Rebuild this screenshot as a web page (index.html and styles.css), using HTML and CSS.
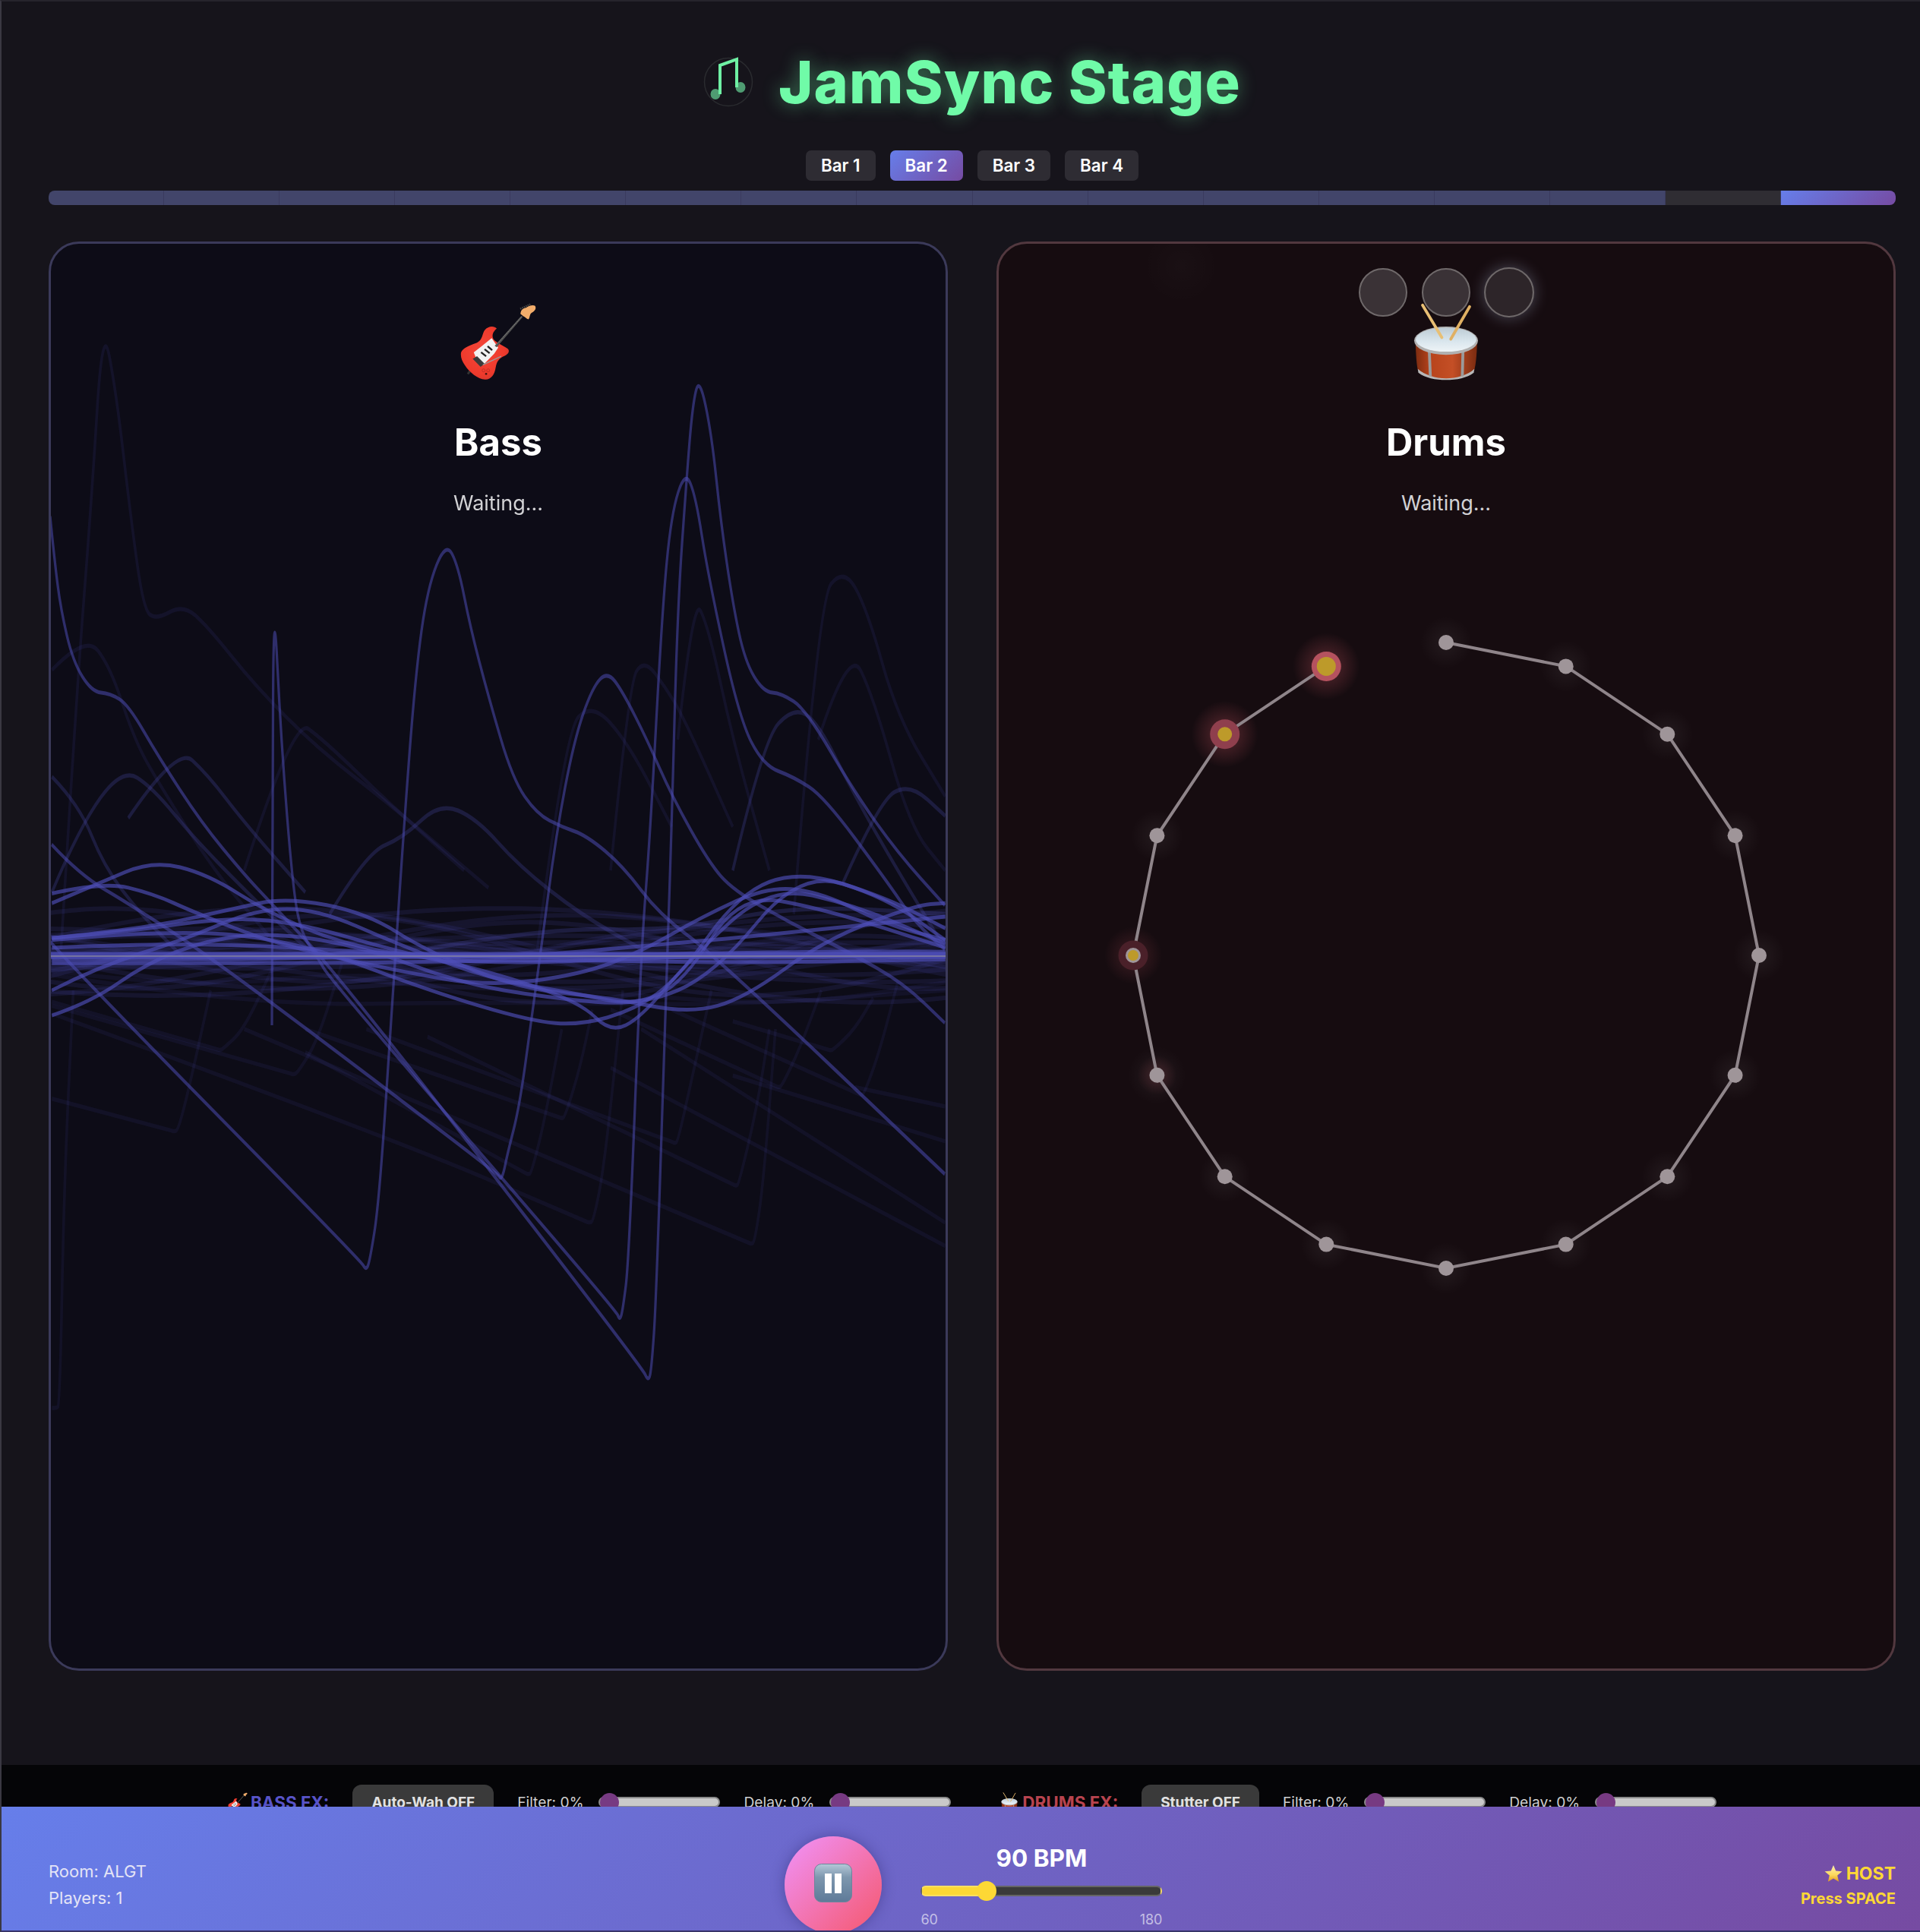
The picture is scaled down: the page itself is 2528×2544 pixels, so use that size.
FILE: index.html
```html
<!DOCTYPE html>
<html lang="en">
<head>
  <meta charset="UTF-8">
  <title>JamSync Stage</title>
  <link rel="stylesheet" href="styles.css">
</head>
<body>

  <svg class="sprites" width="0" height="0" aria-hidden="true">
    <defs>
      <radialGradient id="bodyRed" cx="45%" cy="45%" r="65%">
        <stop offset="0" stop-color="#f4473a"/>
        <stop offset="0.7" stop-color="#ee3a2c"/>
        <stop offset="1" stop-color="#c9362e"/>
      </radialGradient>
      <linearGradient id="drumShell" x1="0" y1="0" x2="1" y2="0">
        <stop offset="0" stop-color="#7d2c10"/>
        <stop offset="0.25" stop-color="#b8441c"/>
        <stop offset="0.6" stop-color="#c44f26"/>
        <stop offset="1" stop-color="#7a2b10"/>
      </linearGradient>
      <linearGradient id="drumHead" x1="0" y1="0" x2="0" y2="1">
        <stop offset="0" stop-color="#bccbd4"/>
        <stop offset="0.6" stop-color="#dbe7ee"/>
        <stop offset="1" stop-color="#eef4f7"/>
      </linearGradient>
      <linearGradient id="pauseFace" x1="0" y1="0" x2="0" y2="1">
        <stop offset="0" stop-color="#b4c8d8"/>
        <stop offset="0.35" stop-color="#7d97ae"/>
        <stop offset="1" stop-color="#5e7a98"/>
      </linearGradient>
      <linearGradient id="starFace" x1="0" y1="0" x2="0" y2="1">
        <stop offset="0" stop-color="#fff2b0"/>
        <stop offset="0.6" stop-color="#fbd75b"/>
        <stop offset="1" stop-color="#e29a1c"/>
      </linearGradient>
      <radialGradient id="halo">
        <stop offset="0" stop-color="#ffffff" stop-opacity="0.06"/>
        <stop offset="1" stop-color="#ffffff" stop-opacity="0"/>
      </radialGradient>
      <radialGradient id="redHalo">
        <stop offset="0.4" stop-color="#ff6b7a" stop-opacity="0.18"/>
        <stop offset="1" stop-color="#ff6b7a" stop-opacity="0"/>
      </radialGradient>

      <symbol id="guitar" viewBox="195 85 302 307">
        <path d="M230 352l-8 12 7 5 8-10z" fill="#333"/>
        <path d="M198 290C196 268 222 256 262 242C285 232 282 205 293 192C305 176 330 174 340 186C330 196 320 206 325 224C330 238 360 250 384 266C392 274 388 286 372 294C348 304 340 318 336 340C332 368 318 388 296 388C268 390 232 360 214 332C204 318 198 304 198 290Z" fill="url(#bodyRed)"/>
        <path d="M249 281L278 258L320 224L346 262L330 286L291 326L262 312Z" fill="#f2f2f2"/>
        <path d="M332 254L437 136L443 141L340 260Z" fill="#4f4f4f"/>
        <path d="M335 254L440 138" stroke="#b5b5b5" stroke-width="1.5" stroke-dasharray="6 3"/>
        <path d="M434 128C436 112 444 106 456 104C470 94 484 92 492 96C498 106 492 116 478 124C470 130 472 142 466 150C458 148 452 140 446 138Z" fill="#f2ad6b"/>
        <path d="M433 108L473 90" stroke="#444" stroke-width="7" stroke-dasharray="5 3"/>
        <path d="M278 280L298 296M292 268L312 284M304 256L322 272" stroke="#222" stroke-width="7"/>
        <path d="M245 306L262 296L292 326L276 338Z" fill="#3a3a3a"/>
        <path d="M285 330L358 296" stroke="#9a9a9a" stroke-width="4"/>
        <circle cx="298" cy="366" r="4" fill="#3a1410"/>
        <circle cx="288" cy="352" r="6" fill="none" stroke="#b02c22" stroke-width="2"/>
        <circle cx="306" cy="352" r="6" fill="none" stroke="#b02c22" stroke-width="2"/>
      </symbol>

      <symbol id="drum" viewBox="486 238 248 296">
        <path d="M493 384C495 440 497 470 502 494C530 518 570 530 610 530C650 530 692 518 718 494C724 470 727 440 729 384Z" fill="url(#drumShell)"/>
        <path d="M502 490C530 514 570 526 610 526C650 526 692 514 718 490L716 504C690 524 650 532 610 532C570 532 530 524 504 504Z" fill="#b7b7b7"/>
        <path d="M545 402L550 518M675 402L672 518" stroke="#9a9a9a" stroke-width="11"/>
        <ellipse cx="610" cy="382" rx="122" ry="54" fill="#b0b0b0"/>
        <ellipse cx="610" cy="378" rx="116" ry="46" fill="url(#drumHead)"/>
        <path d="M520 246L594 370" stroke="#e8bf74" stroke-width="11" stroke-linecap="round"/>
        <path d="M700 252L628 376" stroke="#e0b063" stroke-width="11" stroke-linecap="round"/>
      </symbol>

      <symbol id="star" viewBox="0 0 24 24">
        <path d="M12 1L15.2 8.6L23.4 9.3L17.2 14.6L19.1 22.7L12 18.4L4.9 22.7L6.8 14.6L.6 9.3L8.8 8.6Z" fill="url(#starFace)"/>
      </symbol>
    </defs>
  </svg>

  <div class="app">

    <header class="title-row">
      <svg class="logo" viewBox="0 0 66 66" aria-hidden="true">
        <circle cx="33" cy="33" r="31.5" fill="none" stroke="#2a2b2f" stroke-width="1.5"/>
        <ellipse cx="16" cy="49" rx="6.5" ry="7" fill="#4f9c72"/>
        <ellipse cx="49" cy="40" rx="6.5" ry="7" fill="#4f9c72"/>
        <path d="M22 49V11L44 3V40" fill="none" stroke="#6ff0a4" stroke-width="4"/>
      </svg>
      <h1>JamSync Stage</h1>
    </header>

    <nav class="bar-tabs">
      <span class="bar-tab">Bar 1</span>
      <span class="bar-tab active">Bar 2</span>
      <span class="bar-tab">Bar 3</span>
      <span class="bar-tab">Bar 4</span>
    </nav>

    <div class="progress">
      <i class="step done"></i><i class="step done"></i><i class="step done"></i><i class="step done"></i>
      <i class="step done"></i><i class="step done"></i><i class="step done"></i><i class="step done"></i>
      <i class="step done"></i><i class="step done"></i><i class="step done"></i><i class="step done"></i>
      <i class="step done"></i><i class="step done"></i><i class="step"></i><i class="step now"></i>
    </div>

    <main class="stage">

      <section class="panel bass">
        <canvas id="bassWaves" class="panel-art" width="1180" height="1878"></canvas>
        <svg class="emoji" viewBox="0 0 102 102" aria-hidden="true"><use href="#guitar" width="102" height="102"/></svg>
        <h2>Bass</h2>
        <p class="status">Waiting...</p>
      </section>

      <section class="panel drums">
        <svg class="panel-art" viewBox="1314 320 1180 1878" aria-hidden="true">
          <circle cx="1555" cy="350" r="50" fill="url(#halo)" opacity="0.3"/>
          <g fill="url(#halo)">
            <circle cx="1904" cy="846" r="34"/><circle cx="2061.7" cy="877.4" r="34"/>
            <circle cx="2195.3" cy="966.7" r="34"/><circle cx="2284.6" cy="1100.3" r="34"/>
            <circle cx="2316" cy="1258" r="34"/><circle cx="2284.6" cy="1415.7" r="34"/>
            <circle cx="2195.3" cy="1549.3" r="34"/><circle cx="2061.7" cy="1638.6" r="34"/>
            <circle cx="1904" cy="1670" r="34"/><circle cx="1746.3" cy="1638.6" r="34"/>
            <circle cx="1612.7" cy="1549.3" r="34"/><circle cx="1523.4" cy="1415.7" r="38"/>
            <circle cx="1523.4" cy="1100.3" r="34"/>
          </g>
          <circle cx="1746.3" cy="877.4" r="44" fill="url(#redHalo)"/>
          <circle cx="1612.7" cy="966.7" r="44" fill="url(#redHalo)"/>
          <circle cx="1492" cy="1258" r="38" fill="url(#redHalo)" opacity="0.6"/>
          <circle cx="1523.4" cy="1415.7" r="26" fill="url(#redHalo)" opacity="0.5"/>
          <polyline class="ring-line" points="1904,846 2061.7,877.4 2195.3,966.7 2284.6,1100.3 2316,1258 2284.6,1415.7 2195.3,1549.3 2061.7,1638.6 1904,1670 1746.3,1638.6 1612.7,1549.3 1523.4,1415.7 1492,1258 1523.4,1100.3 1612.7,966.7 1746.3,877.4"/>
          <circle class="hit-ring faint" cx="1492" cy="1258" r="19.5"/>
          <g class="ring-dot">
            <circle cx="1904" cy="846" r="10"/><circle cx="2061.7" cy="877.4" r="10"/>
            <circle cx="2195.3" cy="966.7" r="10"/><circle cx="2284.6" cy="1100.3" r="10"/>
            <circle cx="2316" cy="1258" r="10"/><circle cx="2284.6" cy="1415.7" r="10"/>
            <circle cx="2195.3" cy="1549.3" r="10"/><circle cx="2061.7" cy="1638.6" r="10"/>
            <circle cx="1904" cy="1670" r="10"/><circle cx="1746.3" cy="1638.6" r="10"/>
            <circle cx="1612.7" cy="1549.3" r="10"/><circle cx="1523.4" cy="1415.7" r="10"/>
            <circle cx="1523.4" cy="1100.3" r="10"/><circle cx="1492" cy="1258" r="10"/>
          </g>
          <circle class="hit-ring" cx="1746.3" cy="877.4" r="19.5"/>
          <circle class="hit-core" cx="1746.3" cy="877.4" r="12.5"/>
          <circle class="hit-ring dim" cx="1612.7" cy="966.7" r="19.5"/>
          <circle class="hit-core" cx="1612.7" cy="966.7" r="9.5"/>
          <circle class="hit-core" cx="1492" cy="1258" r="7"/>
        </svg>
        <div class="pads">
          <span class="pad"></span>
          <span class="pad"></span>
          <span class="pad lit"></span>
        </div>
        <svg class="emoji" viewBox="0 0 102 102" aria-hidden="true"><use href="#drum" width="102" height="102"/></svg>
        <h2>Drums</h2>
        <p class="status">Waiting...</p>
      </section>

    </main>

    <div class="fx-row">
      <div class="fx-group">
        <span class="fx-name bass-name"><svg class="fx-icon" viewBox="0 0 26 26" aria-hidden="true"><use href="#guitar" width="26" height="26"/></svg>BASS FX:</span>
        <button class="fx-toggle">Auto-Wah OFF</button>
        <label class="fx-slider">Filter: 0%<input type="range" min="0" max="100" value="0"></label>
        <label class="fx-slider">Delay: 0%<input type="range" min="0" max="100" value="0"></label>
      </div>
      <div class="fx-group">
        <span class="fx-name drums-name"><svg class="fx-icon" viewBox="0 0 26 26" aria-hidden="true"><use href="#drum" width="26" height="26"/></svg>DRUMS FX:</span>
        <button class="fx-toggle">Stutter OFF</button>
        <label class="fx-slider">Filter: 0%<input type="range" min="0" max="100" value="0"></label>
        <label class="fx-slider">Delay: 0%<input type="range" min="0" max="100" value="0"></label>
      </div>
    </div>

    <footer class="transport">
      <div class="room-info">
        <div>Room: ALGT</div>
        <div>Players: 1</div>
      </div>
      <div class="controls">
        <button class="play-btn" aria-label="Pause">
          <svg viewBox="0 0 50 51" aria-hidden="true">
            <rect x="0.5" y="0.5" width="49" height="50" rx="9" fill="url(#pauseFace)" stroke="#6d859c"/>
            <rect x="14" y="13" width="9" height="26" fill="#fff"/>
            <rect x="27" y="13" width="9" height="26" fill="#fff"/>
          </svg>
        </button>
        <div class="tempo">
          <div class="tempo-value">90 BPM</div>
          <input class="tempo-slider" type="range" min="60" max="180" value="90">
          <div class="tempo-range"><span>60</span><span>180</span></div>
        </div>
      </div>
      <div class="host-info">
        <div class="host-badge"><svg class="star" viewBox="0 0 24 24" aria-hidden="true"><use href="#star"/></svg>HOST</div>
        <div class="host-hint">Press SPACE</div>
      </div>
    </footer>

  </div>

  <script src="waves.js"></script>
</body>
</html>
```

FILE: styles.css
```css
* {
  box-sizing: border-box;
}

body {
  margin: 0;
  background-color: #16141b;
  font-family: Inter, "Liberation Sans", sans-serif;
  color: white;
}

.sprites {
  position: absolute;
}

.app {
  display: flex;
  flex-direction: column;
  width: 2528px;
  height: 2544px;
  overflow: hidden;
  border-left: 2px solid #3a3842;
  border-top: 2px solid #26242c;
  border-bottom: 2px solid #37346a;
}

.title-row {
  display: flex;
  justify-content: center;
  align-items: center;
  gap: 33px;
  height: 92px;
  margin: 60px 32px 0 62px;
}

.logo {
  width: 66px;
  height: 66px;
}

h1 {
  margin: 0;
  font-size: 77px;
  line-height: 92px;
  font-weight: 800;
  letter-spacing: 1.2px;
  color: #70fba8;
  text-shadow: 0 0 24px rgba(112, 251, 168, 0.45);
}

.bar-tabs {
  display: flex;
  justify-content: center;
  gap: 19px;
  margin: 44px 32px 0 62px;
}

.bar-tab {
  padding: 0 20px;
  height: 40px;
  line-height: 40px;
  text-align: center;
  border-radius: 7px;
  background-color: #2e2c33;
  font-size: 22.4px;
  font-weight: 600;
}

.bar-tab.active {
  background: linear-gradient(135deg, #667eea, #764ba2);
}

.progress {
  display: flex;
  height: 19px;
  margin: 13px 32px 0 62px;
  border-radius: 8px;
  overflow: hidden;
}

.step {
  flex: 1;
  background-color: #2f2d33;
  border-right: 1px solid #3a3a5e;
}

.step.done {
  background-color: #42456a;
}

.step.now {
  background: linear-gradient(135deg, #667eea, #764ba2);
  border-right: none;
}

.stage {
  display: grid;
  grid-template-columns: 1fr 1fr;
  gap: 64px;
  height: 1882px;
  margin: 48px 32px 0 62px;
}

.panel {
  position: relative;
  display: flex;
  flex-direction: column;
  align-items: center;
  border-radius: 40px;
  border: 3px solid;
  overflow: hidden;
}

.panel.bass {
  background-color: #0d0c17;
  border-color: #3b3a5a;
}

.panel.drums {
  background-color: #160c10;
  border-color: #52383f;
}

.panel-art {
  position: absolute;
  left: -1px;
  top: -1px;
  width: 1180px;
  height: 1878px;
}

.ring-line {
  fill: none;
  stroke: #8f858a;
  stroke-width: 4;
}

.ring-dot {
  fill: #9f9599;
}

.hit-ring {
  fill: #b5525f;
}

.hit-ring.dim {
  fill: #8f3f4d;
}

.hit-ring.faint {
  fill: #4a2029;
}

.hit-core {
  fill: #bd9a2a;
}

.emoji {
  position: relative;
  width: 102px;
  height: 102px;
  margin-top: 78px;
}

.panel h2 {
  position: relative;
  margin: 52px 0 0 0;
  font-size: 49px;
  line-height: 60px;
  font-weight: 700;
}

.status {
  position: relative;
  margin: 32px 0 0 0;
  font-size: 27px;
  line-height: 36px;
  color: #d2d2d5;
}

.pads {
  position: absolute;
  top: 32px;
  left: 0;
  right: 0;
  display: flex;
  justify-content: center;
  gap: 19px;
}

.pad {
  width: 64px;
  height: 64px;
  border-radius: 50%;
  background-color: #3a3236;
  border: 2px solid #6f696a;
}

.pad.lit {
  background-color: #2d2529;
  transform: scale(1.03);
  box-shadow: 0 0 20px rgba(190, 205, 235, 0.32);
}

.fx-row {
  display: flex;
  justify-content: center;
  gap: 64px;
  height: 55px;
  margin-top: auto;
  padding: 26px 0 0 30px;
  background-color: #050507;
  overflow: hidden;
  flex-shrink: 0;
}

.fx-group {
  display: flex;
  align-items: center;
  gap: 31px;
  height: 46px;
}

.fx-name {
  display: flex;
  align-items: center;
  gap: 4px;
  font-size: 22.5px;
  font-weight: 700;
}

.bass-name {
  color: #5854c8;
}

.drums-name {
  color: #b8444f;
}

.fx-icon {
  width: 26px;
  height: 26px;
}

.fx-toggle {
  height: 46px;
  padding: 0 25px;
  border: none;
  border-radius: 12px;
  background-color: #3a3a3a;
  color: #e2e2e2;
  font-family: inherit;
  font-size: 19px;
  font-weight: 700;
}

.fx-slider {
  display: flex;
  align-items: center;
  gap: 20px;
  font-size: 19.2px;
  color: #cfcfcf;
}

.fx-slider input {
  -webkit-appearance: none;
  appearance: none;
  width: 160px;
  height: 14px;
  margin: 0;
  border: 2px solid #8a8a8a;
  border-radius: 7px;
  background-color: #c9c9c9;
}

.fx-slider input::-webkit-slider-thumb {
  -webkit-appearance: none;
  width: 25px;
  height: 25px;
  border-radius: 50%;
  background-color: #773a82;
}

.transport {
  display: flex;
  justify-content: space-between;
  align-items: flex-start;
  flex-shrink: 0;
  height: 163px;
  padding: 0 32px 0 62px;
  background: linear-gradient(135deg, #667eea, #764ba2);
  overflow: hidden;
}

.room-info {
  padding-top: 68px;
  font-size: 22px;
  line-height: 35px;
  color: #e4e4f6;
}

.controls {
  display: flex;
  gap: 51px;
  padding-top: 39px;
}

.play-btn {
  display: flex;
  justify-content: center;
  align-items: center;
  width: 128px;
  height: 128px;
  padding: 0;
  border: none;
  border-radius: 50%;
  background: linear-gradient(135deg, #f093fb, #f5576c);
  box-shadow: 0 0 18px rgba(30, 20, 80, 0.35);
}

.play-btn svg {
  width: 50px;
  height: 51px;
  margin-top: -6px;
}

.tempo {
  width: 318px;
  margin-top: 10px;
}

.tempo-value {
  text-align: center;
  font-size: 31.5px;
  line-height: 38px;
  font-weight: 700;
}

.tempo-slider {
  -webkit-appearance: none;
  appearance: none;
  display: block;
  width: 318px;
  height: 14px;
  margin: 17px 0 0 0;
  border: 2px solid rgba(255, 255, 255, 0.22);
  border-radius: 7px;
  background: linear-gradient(to right, #fdd835 27%, #3a3a3a 27%);
}

.tempo-slider::-webkit-slider-thumb {
  -webkit-appearance: none;
  width: 26px;
  height: 26px;
  border-radius: 50%;
  background-color: #fdd835;
}

.tempo-range {
  display: flex;
  justify-content: space-between;
  margin-top: 19px;
  font-size: 18px;
  line-height: 24px;
  color: rgba(255, 255, 255, 0.6);
}

.host-info {
  padding-top: 71px;
  text-align: right;
  color: #fdd835;
  font-weight: 700;
}

.host-badge {
  display: flex;
  justify-content: flex-end;
  align-items: center;
  gap: 5px;
  font-size: 23px;
  line-height: 34px;
}

.star {
  width: 24px;
  height: 30px;
}

.host-hint {
  font-size: 20px;
  line-height: 32px;
}
```

FILE: waves.js
```js
// bass history: each trace is a list of points, newest traces are brightest
const canvas = document.getElementById("bassWaves");
const ctx = canvas.getContext("2d");

// points below are measured on two crops of the panel, scaled back to page px
const upper = pts => pts.map(([x, y]) => [x * 0.804, 400 + y * 0.574]);
const lower = pts => pts.map(([x, y]) => [x * 0.804, 1100 + y * 0.51]);

function stroke(pts, alpha, width) {
  ctx.globalAlpha = alpha;
  ctx.lineWidth = width;
  ctx.beginPath();
  ctx.moveTo(pts[0][0], pts[0][1]);
  for (let i = 1; i < pts.length - 1; i++) {
    const mx = (pts[i][0] + pts[i + 1][0]) / 2;
    const my = (pts[i][1] + pts[i + 1][1]) / 2;
    ctx.quadraticCurveTo(pts[i][0], pts[i][1], mx, my);
  }
  const last = pts[pts.length - 1];
  ctx.lineTo(last[0], last[1]);
  // the pen is narrower across than along, so steep lines come out thin
  ctx.save();
  ctx.scale(0.65, 1);
  ctx.stroke();
  ctx.restore();
}

ctx.translate(-66, -320);
ctx.strokeStyle = "#4e4eb8";
ctx.lineJoin = "round";

// oldest, barely visible traces above the centre line
[
  [[85,840],[140,760],[180,830],[220,1000],[260,1100],[350,1300],[440,1450]],
  [[100,1480],[125,900],[150,450],[168,40],[190,200],[215,500],[235,700],[255,725],[300,690],[340,740],[420,880],[520,1020],[640,1150],[800,1340]],
  [[880,1480],[925,980],[970,915],[1030,1010],[1100,1200]],
  [[1000,1300],[1030,870],[1055,815],[1090,880],[1120,950],[1200,1200]],
  [[1110,1000],[1135,670],[1160,740],[1200,1000],[1260,1300]],
  [[1300,1400],[1340,680],[1382,605],[1420,700],[1470,950],[1548,1130]],
  [[1340,1000],[1390,785],[1430,900],[1490,1200],[1548,1300]],
  [[400,1300],[480,950],[530,1000],[640,1150],[760,1300]]
].forEach(t => stroke(upper(t), 0.12, 5.5));

// same age, below the centre line
[
  [[85,430],[352,550],[360,555],[366,550],[400,500],[450,330]],
  [[85,440],[472,612],[480,618],[488,612],[520,530],[560,330]],
  [[85,680],[278,760],[285,765],[292,760],[310,650],[345,400]],
  [[85,460],[640,780],[958,996],[965,1000],[972,996],[990,850],[1020,400]],
  [[400,500],[1224,1050],[1230,1055],[1236,1050],[1250,900],[1270,500]],
  [[600,500],[1100,790],[1105,795],[1110,790],[1130,650],[1165,400]],
  [[700,520],[1200,900],[1205,905],[1210,900],[1240,700],[1260,500]],
  [[1000,450],[1270,648],[1275,650],[1280,648],[1310,550],[1345,400]],
  [[1100,450],[1405,668],[1410,670],[1415,668],[1440,560],[1470,380]],
  [[1200,480],[1355,553],[1360,555],[1365,553],[1400,500],[1430,420]],
  [[500,560],[860,872],[865,875],[870,872],[890,750],[920,500]],
  [[500,500],[915,728],[920,730],[925,728],[950,600],[970,450]],
  [[85,1478],[92,1480],[98,1470],[105,900],[120,400]],
  [[1050,500],[1548,1000]],
  [[1200,620],[1548,790]],
  [[1400,650],[1548,700]],
  [[1000,600],[1548,1060]],
  [[85,360],[400,440],[800,430],[1200,440],[1548,400]],
  [[85,350],[300,395],[600,350],[1000,410],[1300,440],[1548,380]]
].forEach(t => stroke(lower(t), 0.1, 5.5));

// haze of small waves hugging the centre line
for (let k = 0; k < 22; k++) {
  const pts = [];
  const amp = 8 + (k % 7) * 9;
  for (let x = 64; x <= 1300; x += 40) {
    pts.push([x, 1258 + amp * Math.sin(x / (130 + k * 9) + k * 1.7)]);
  }
  stroke(pts, 0.14, 6);
}

// mid-age humps
[
  [[85,1085],[130,1150],[170,1290],[230,1400],[300,1500]],
  [[85,1350],[130,1200],[200,1065],[250,1110],[320,1230],[440,1400],[520,1500]],
  [[540,1400],[600,1260],[660,1225],[720,1145],[780,1180],[850,1290],[950,1400],[1050,1480]],
  [[1200,1300],[1250,1000],[1300,925],[1340,960],[1400,1130],[1470,1300],[1548,1480]],
  [[1380,1330],[1440,1140],[1490,1100],[1548,1175]],
  [[210,1180],[290,1015],[340,1080],[400,1190],[500,1350]],
  [[700,1480],[900,1430],[1100,1440],[1300,1380],[1548,1400]]
].forEach(t => stroke(upper(t), 0.25, 5.5));

// the four big swings with their long falling tails
const tails = [
  [[66,680],[72,740],[80,802],[96,871],[121,911],[145,913],[169,928],[209,997],[265,1083],[322,1152],[354,1186],[450,1289],[845,1800],[854,1820],[858,1800],[864,1712],[877,1304],[884,1100],[892,802],[904,630],[912,532],[921,496],[937,572],[949,687],[965,796],[981,871],[1005,911],[1029,913],[1061,934],[1125,1043],[1182,1123],[1244,1192]],
  [[68,1112],[105,1152],[170,1190],[289,1268],[655,1545],[659,1553],[663,1545],[668,1520],[684,1457],[700,1340],[712,1253],[732,1100],[756,974],[780,905],[800,884],[820,911],[852,974],[885,1049],[933,1135],[965,1172],[1040,1215],[1120,1255],[1190,1295],[1244,1347]],
  [[66,1240],[105,1284],[475,1660],[482,1673],[487,1660],[499,1584],[515,1345],[531,1100],[547,888],[563,773],[587,714],[603,744],[619,825],[643,917],[675,1026],[707,1072],[740,1089],[772,1100],[820,1140],[868,1204],[941,1258],[1244,1546]],
  [[358,1350],[359,1100],[360,770],[370,974],[386,1175],[398,1232],[418,1260],[434,1289],[811,1725],[816,1739],[820,1725],[828,1661],[844,1253],[856,1100],[872,802],[884,676],[902,620],[916,653],[932,756],[973,945],[1005,1008],[1045,1023],[1085,1049],[1166,1158],[1205,1215],[1244,1250]]
];
tails.forEach(t => stroke(t, 0.52, 5));

// low swells gathered around the centre line
[
  [[85,175],[160,125],[250,65],[340,100],[440,200],[560,280],[700,320],[850,330],[1000,320],[1200,310],[1548,310]],
  [[85,150],[170,120],[250,150],[320,200],[450,280],[650,350],[800,390],[950,360],[1050,300],[1150,210],[1260,130],[1350,150],[1450,230],[1548,270]],
  [[85,265],[240,240],[380,190],[470,160],[600,200],[700,300],[850,395],[1000,420],[1130,460],[1220,420],[1350,270],[1500,180],[1548,175]],
  [[85,465],[150,430],[240,330],[340,270],[450,250],[600,290],[750,380],[900,420],[1050,440],[1170,360],[1310,90],[1450,160],[1548,240]],
  [[85,400],[160,340],[300,270],[420,190],[520,190],[650,280],[800,370],[950,410],[1040,440],[1120,380],[1210,150],[1350,190],[1548,290]],
  [[85,265],[200,250],[380,210],[500,230],[650,300],[800,350],[950,430],[1000,510],[1050,470],[1130,320],[1260,130],[1400,180],[1548,280]],
  [[85,270],[300,240],[500,280],[700,400],[870,480],[950,490],[1040,450],[1110,370],[1210,150],[1310,90],[1450,160],[1548,270]],
  [[85,290],[300,275],[600,300],[800,320],[1100,280],[1300,250],[1548,210]],
  [[85,320],[400,320],[700,310],[1000,310],[1300,300],[1548,300]],
  [[85,330],[300,330],[600,330],[900,320],[1200,330],[1548,320]]
].forEach(t => stroke(lower(t), 0.65, 5));

// resting line with its thin grey core
stroke([[64,1258],[1300,1258]], 0.85, 9);
ctx.strokeStyle = "#8a88a0";
stroke([[64,1259],[1300,1259]], 0.7, 2);
```
